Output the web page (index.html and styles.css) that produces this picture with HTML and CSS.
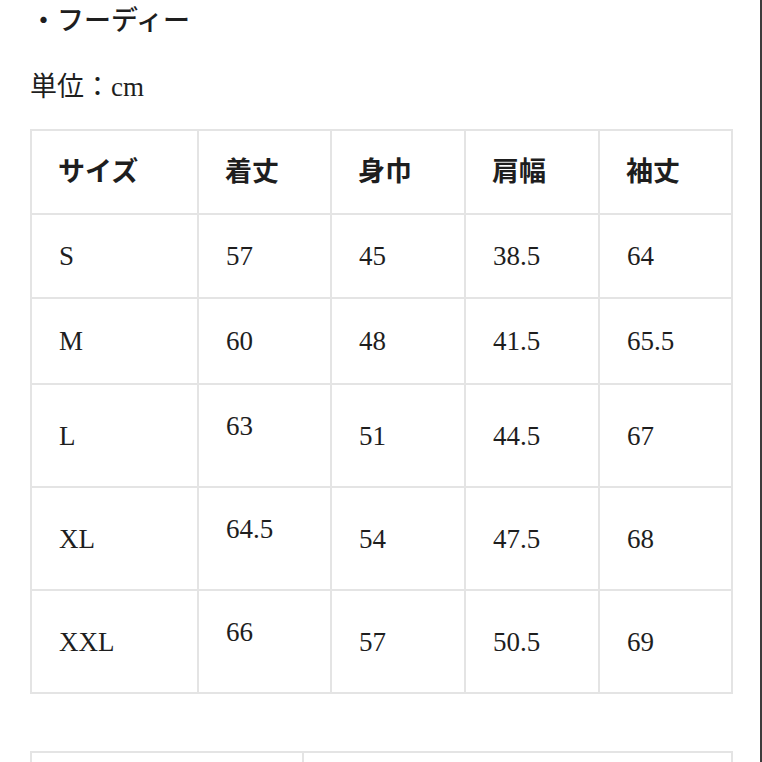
FILE: index.html
```html
<!DOCTYPE html>
<html lang="ja">
<head>
<meta charset="utf-8">
<link rel="stylesheet" href="styles.css">
<title>フーディー サイズ</title>
</head>
<body>
<div class="page">
  <div class="content">
    <p class="title">・フーディー</p>
    <p class="unit">単位：cm</p>
    <table class="size-table">
      <colgroup>
        <col class="c1"><col class="c2"><col class="c3"><col class="c4"><col class="c5">
      </colgroup>
      <thead>
        <tr class="row-short">
          <th>サイズ</th><th>着丈</th><th>身巾</th><th>肩幅</th><th>袖丈</th>
        </tr>
      </thead>
      <tbody>
        <tr class="row-short"><td>S</td><td>57</td><td>45</td><td>38.5</td><td>64</td></tr>
        <tr class="row-mid"><td>M</td><td>60</td><td>48</td><td>41.5</td><td>65.5</td></tr>
        <tr class="row-tall"><td>L</td><td class="raised">63</td><td>51</td><td>44.5</td><td>67</td></tr>
        <tr class="row-tall"><td>XL</td><td class="raised">64.5</td><td>54</td><td>47.5</td><td>68</td></tr>
        <tr class="row-tall"><td>XXL</td><td class="raised">66</td><td>57</td><td>50.5</td><td>69</td></tr>
      </tbody>
    </table>
    <table class="size-table next-table">
      <colgroup><col class="n1"><col class="n2"></colgroup>
      <tbody>
        <tr class="row-next"><td></td><td></td></tr>
      </tbody>
    </table>
  </div>
</div>
</body>
</html>
```

FILE: styles.css
```css
html, body {
  margin: 0;
  padding: 0;
  background: #ffffff;
  height: 100%;
  overflow: hidden;
}

body {
  font-family: "Liberation Serif", "Noto Sans CJK JP", serif;
  color: #1e1e1e;
}

.page {
  display: flex;
  height: 762px;
  width: 762px;
  border-right: 2px solid #3c3c3c;
  box-sizing: border-box;
  overflow: hidden;
}

.content {
  padding: 0 29px 0 30px;
  flex: 1;
}

.title {
  margin: 0;
  font-size: 27px;
  line-height: 42px;
  font-weight: 500;
}

.unit {
  margin: 24px 0 0;
  font-size: 27px;
  line-height: 42px;
}

.size-table {
  border-collapse: collapse;
  width: 701px;
  margin-top: 21px;
  table-layout: fixed;
}

.size-table th,
.size-table td {
  border: 2px solid #e4e4e4;
  padding: 0 0 0 27px;
  text-align: left;
  vertical-align: middle;
  font-size: 27px;
  line-height: 32px;
}

.size-table th {
  font-weight: 700;
  padding-left: 26px;
}

.c1 { width: 167px; }
.c2 { width: 133px; }
.c3 { width: 134px; }
.c4 { width: 134px; }
.c5 { width: 133px; }

.row-short { height: 84px; }
.row-mid { height: 86px; }
.row-tall { height: 103px; }
.row-next { height: 11px; }

.size-table td.raised {
  padding-bottom: 19px;
}

.next-table {
  margin-top: 57px;
}

.n1 { width: 272px; }
.n2 { width: 429px; }
```
